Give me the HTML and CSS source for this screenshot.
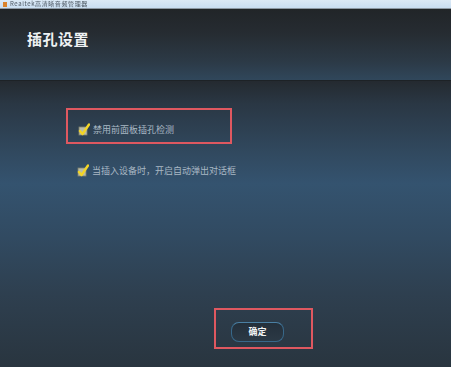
FILE: index.html
```html
<!DOCTYPE html>
<html>
<head>
<meta charset="UTF-8">
<title>插孔设置</title>
<link rel="stylesheet" href="styles.css">
</head>
<body>
	<div class="window">
		<div class="titlebar">
			<span class="app-icon"></span>
			<span class="app-name">Realtek高清晰音频管理器</span>
		</div>

		<div class="header">
			<h1 class="heading">插孔设置</h1>
		</div>

		<div class="content">
			<div class="mark-box option-box">
				<label class="option">
					<svg class="tick" width="12" height="13" viewBox="0 0 12 13">
						<rect x="1" y="4" width="8" height="8" fill="#b9bba8" stroke="#7f806a" stroke-width="0.8"/>
						<path d="M2 8 L4.5 11 L11 1.5" fill="none" stroke="#f3d526" stroke-width="2.4" stroke-linecap="round" stroke-linejoin="round"/>
					</svg>
					<span>禁用前面板插孔检测</span>
				</label>
			</div>

			<label class="option option-free">
				<svg class="tick" width="12" height="13" viewBox="0 0 12 13">
					<rect x="1" y="4" width="8" height="8" fill="#b9bba8" stroke="#7f806a" stroke-width="0.8"/>
					<path d="M2 8 L4.5 11 L11 1.5" fill="none" stroke="#f3d526" stroke-width="2.4" stroke-linecap="round" stroke-linejoin="round"/>
				</svg>
				<span>当插入设备时，开启自动弹出对话框</span>
			</label>

			<div class="mark-box button-box">
				<div class="ok-btn">确定</div>
			</div>
		</div>
	</div>
</body>
</html>
```

FILE: styles.css
```css
body, div, h1, label {
	margin: 0;
	padding: 0;
}
body {
	width: 451px;
	height: 367px;
	overflow: hidden;
	font-family: "Noto Sans CJK SC", "Liberation Sans", sans-serif;
	background: #29343e;
}
.window {
	display: flex;
	flex-direction: column;
	height: 367px;
}
/* 윈도우 제목줄 */
.titlebar {
	height: 8px;
	display: flex;
	align-items: center;
	gap: 3px;
	padding-left: 3px;
	overflow: hidden;
	background: linear-gradient(#dbe9f6, #c9def2);
	border-bottom: 1px solid #8d98a3;
}
.app-icon {
	width: 4px;
	height: 5px;
	background: #d9822b;
}
.app-name {
	font-size: 6px;
	line-height: 8px;
	color: #4a5560;
	letter-spacing: 0.6px;
	filter: blur(0.3px);
}
.header {
	height: 71px;
	padding-left: 27px;
	display: flex;
	align-items: center;
	background: linear-gradient(#212528 0%, #262c32 35%, #2c3a47 75%, #30475b 100%);
	border-bottom: 1px solid #1d2226;
}
.heading {
	font-size: 15px;
	font-weight: bold;
	color: #eef1f3;
	letter-spacing: 0.5px;
	margin-top: -12px;
}
.content {
	flex: 1;
	display: flex;
	flex-direction: column;
	align-items: flex-start;
	background: linear-gradient(#242a30 0%, #2a3744 8%, #31495f 25%, #34536f 36%, #314a61 55%, #2e3f4f 75%, #29353f 100%);
}
.mark-box {
	border: 2px solid #df5860;
	box-sizing: border-box;
}
.option-box {
	margin: 27px 0 0 66px;
	width: 166px;
	height: 36px;
	padding: 13px 0 0 10px;
}
.option {
	display: flex;
	align-items: center;
	gap: 3px;
	font-size: 9px;
	line-height: 12px;
	color: #a9b8c4;
}
.tick {
	display: block;
}
.option-free {
	margin: 20px 0 0 77px;
}
.button-box {
	margin: 131px 0 0 214px;
	width: 99px;
	height: 41px;
	padding: 12px 0 0 15px;
}
.ok-btn {
	width: 53px;
	height: 20px;
	box-sizing: border-box;
	border: 1.5px solid #38688a;
	border-top-color: #4a7fa3;
	border-radius: 8px;
	background: linear-gradient(#24303b, #2b3945);
	color: #f2f4f5;
	font-size: 9px;
	font-weight: bold;
	line-height: 17px;
	text-align: center;
}
```
